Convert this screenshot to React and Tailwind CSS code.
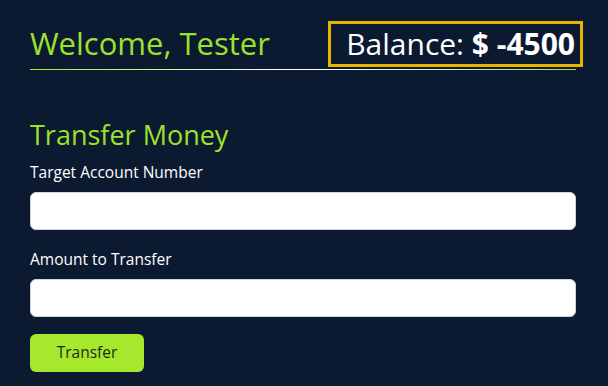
import React, { useState } from "react";

export default function App() {
  const [account, setAccount] = useState("");
  const [amount, setAmount] = useState("");

  return (
    <div
      className="min-h-screen w-full bg-[#0b1a31] px-[30px] pr-[32px] pt-[21px]"
      style={{ fontFamily: '"Open Sans", "Noto Sans", sans-serif' }}
    >
      {/* header */}
      <div className="flex items-end justify-between">
        <h1 className="mb-[8px] text-[31px] leading-[36px] text-[#9be32a]">
          Welcome, Tester
        </h1>
        <div className="-mr-[7px] mb-[2px] flex h-[46px] items-center border-[3px] border-[#e8b400] pl-[15px] pr-[5px] text-[30px] leading-none text-white">
          <span>Balance:&nbsp;</span>
          <span className="font-bold">$ -4500</span>
        </div>
      </div>
      <div className="h-px w-full bg-gradient-to-r from-[#a6e82b] via-white to-[#a6e82b]" />

      {/* form */}
      <h2 className="mt-[48px] text-[27px] leading-[34px] text-[#9be32a]">
        Transfer Money
      </h2>

      <label className="mt-[10px] block text-[15.5px] leading-[20px] text-white">
        Target Account Number
      </label>
      <input
        value={account}
        onChange={(e) => setAccount(e.target.value)}
        className="mt-[10px] block h-[38px] w-full rounded-[6px] border border-gray-300 bg-white px-3 text-black outline-none"
      />

      <label className="mt-[19px] block text-[15.5px] leading-[20px] text-white">
        Amount to Transfer
      </label>
      <input
        value={amount}
        onChange={(e) => setAmount(e.target.value)}
        className="mt-[10px] block h-[38px] w-full rounded-[6px] border border-gray-300 bg-white px-3 text-black outline-none"
      />

      <button className="mt-[17px] h-[38px] w-[114px] rounded-[6px] bg-[#a6e82b] text-[15.5px] text-[#1f2a1a]">
        Transfer
      </button>
    </div>
  );
}
